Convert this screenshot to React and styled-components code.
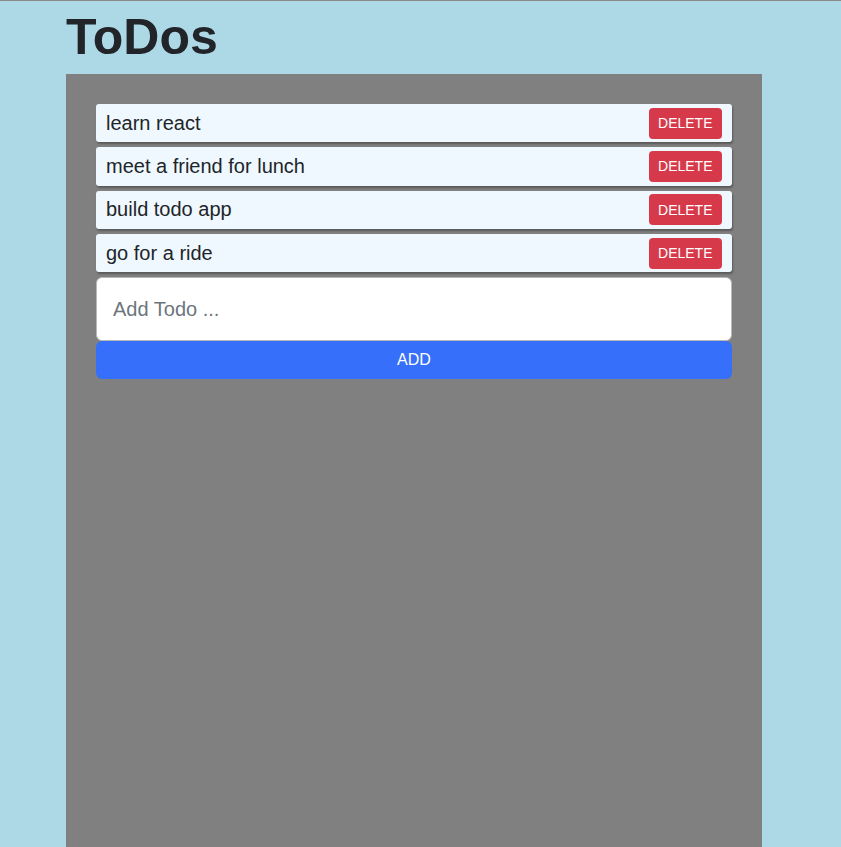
import styled, { createGlobalStyle } from 'styled-components';

const GlobalStyle = createGlobalStyle`
  html, body {
    margin: 0;
    padding: 0;
    background: #add8e6;
    font-family: "Liberation Sans", Arial, sans-serif;
    color: #212529;
  }
  body {
    border-top: 1px solid #8a8a8a;
    min-height: 846px;
  }
`;

const todos = ['learn react', 'meet a friend for lunch', 'build todo app', 'go for a ride'];

const App = () => {
  return (
    <>
      <GlobalStyle />
      <Page>
        <Title>ToDos</Title>
        <Board>
          {todos.map((t) => (
            <Item key={t}>
              <ItemText>{t}</ItemText>
              <DeleteButton>DELETE</DeleteButton>
            </Item>
          ))}
          <TodoInput placeholder="Add Todo ..." />
          <AddButton>ADD</AddButton>
        </Board>
      </Page>
    </>
  );
};

const Page = styled.div`
  width: 696px;
  margin-left: 66px;
  display: flex;
  flex-direction: column;
`;

const Title = styled.h1`
  margin: 0;
  padding-top: 8px;
  height: 73px;
  box-sizing: border-box;
  font-size: 50px;
  font-weight: bold;
  line-height: 56px;
  color: #212529;
`;

const Board = styled.div`
  background: #808080;
  padding: 30px;
  min-height: 773px;
  box-sizing: border-box;
  display: flex;
  flex-direction: column;
`;

const Item = styled.div`
  height: 38.4px;
  margin-bottom: 4.9px;
  background: #f0f8ff;
  border-radius: 3px;
  box-shadow: 1px 2px 2px rgba(0, 0, 0, 0.3);
  display: flex;
  align-items: center;
  justify-content: space-between;
  padding: 0 10px;
`;

const ItemText = styled.span`
  font-size: 20px;
  color: #212529;
`;

const DeleteButton = styled.button`
  height: 31px;
  padding: 0 9.5px;
  border: none;
  border-radius: 4px;
  background: #d63a4a;
  color: #fff;
  font-family: "Liberation Sans", Arial, sans-serif;
  font-size: 14px;
  cursor: pointer;
`;

const TodoInput = styled.input`
  height: 64px;
  box-sizing: border-box;
  border: 1px solid #b8b8b8;
  border-radius: 6px;
  padding: 0 16px;
  font-family: "Liberation Sans", Arial, sans-serif;
  font-size: 20px;
  color: #212529;
  outline: none;
  &::placeholder {
    color: #6c757d;
  }
`;

const AddButton = styled.button`
  height: 38px;
  border: none;
  border-radius: 6px;
  background: #366ff9;
  color: #fff;
  font-family: "Liberation Sans", Arial, sans-serif;
  font-size: 16px;
  cursor: pointer;
`;

export default App;
